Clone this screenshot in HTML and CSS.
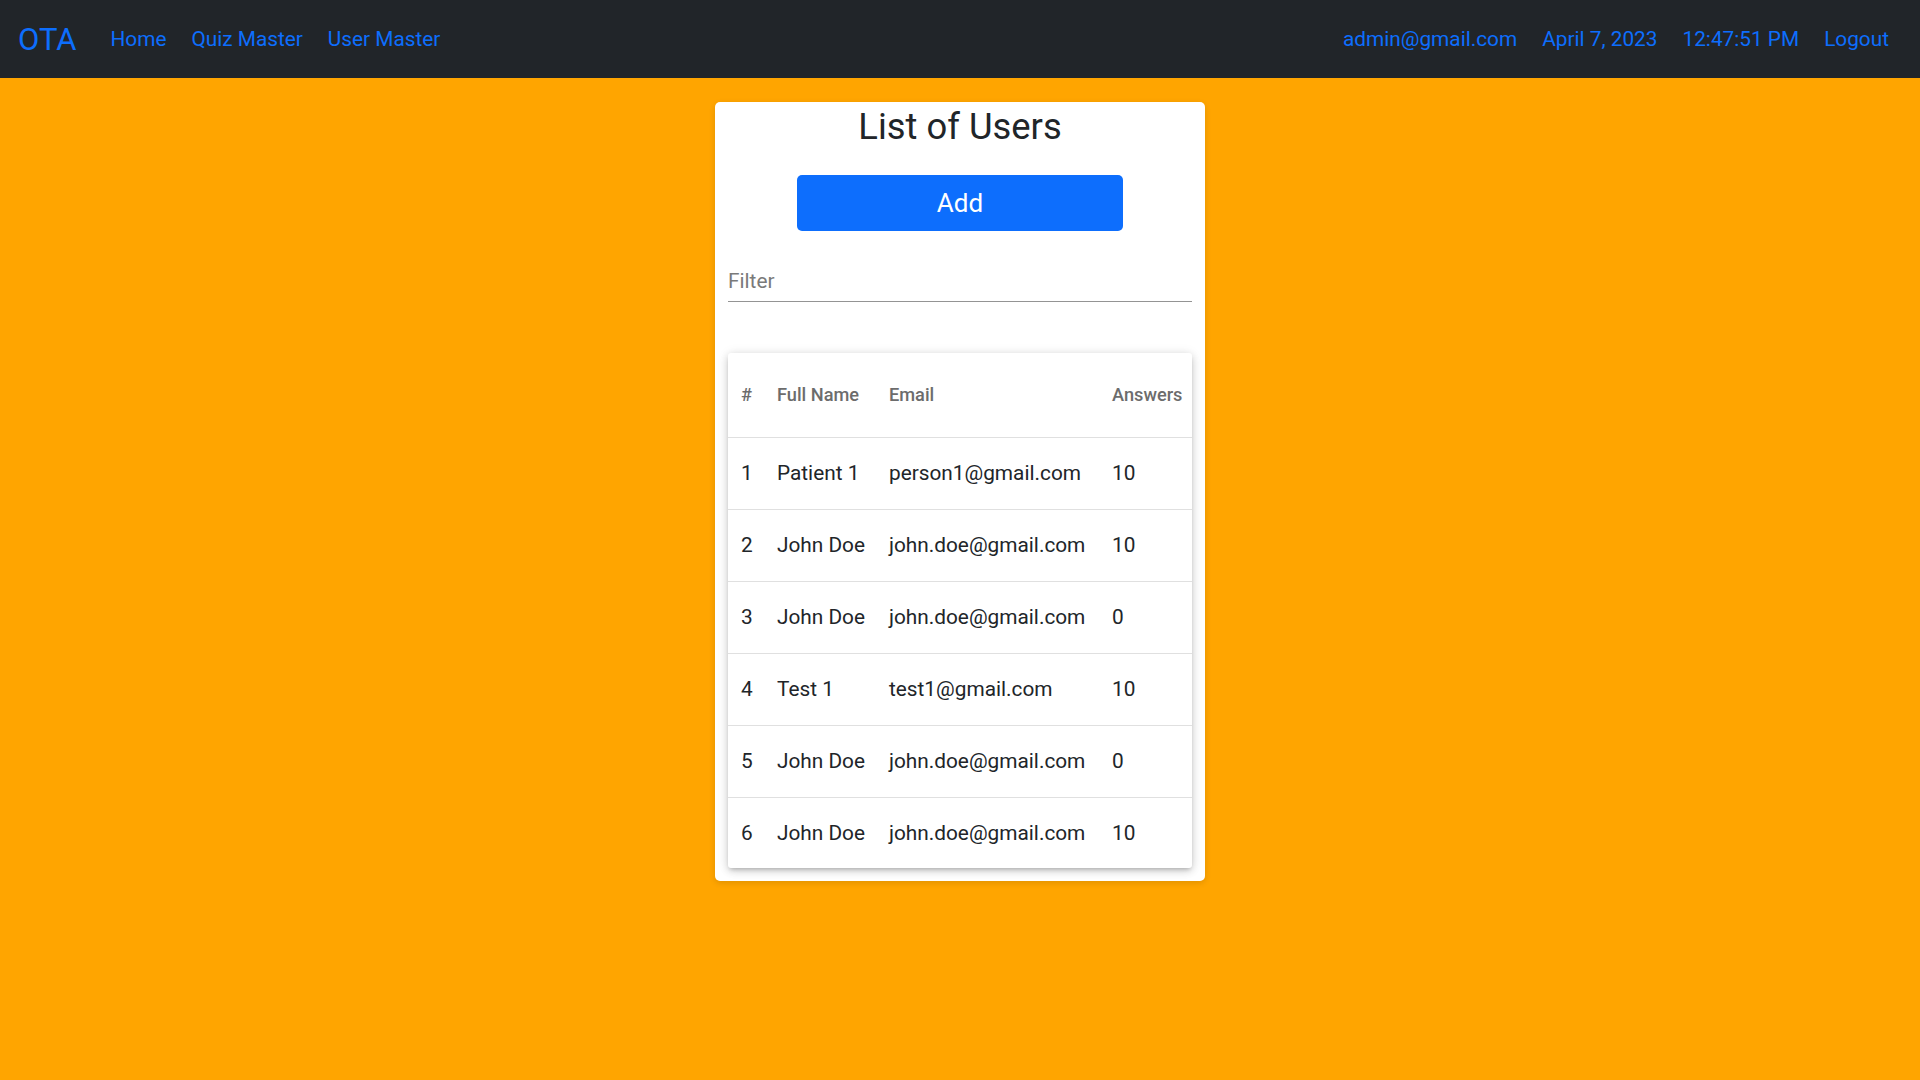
FILE: index.html
```html
<!DOCTYPE html>
<html>
<head>
<meta charset="utf-8">
<link rel="stylesheet" href="styles.css">
</head>
<body>
<nav class="navbar">
  <div class="nav-left">
    <a class="brand" href="#">OTA</a>
    <a class="nav-link" href="#">Home</a>
    <a class="nav-link" href="#">Quiz Master</a>
    <a class="nav-link" href="#">User Master</a>
  </div>
  <div class="nav-right">
    <span class="nav-link">admin@gmail.com</span>
    <span class="nav-link">April 7, 2023</span>
    <span class="nav-link">12:47:51 PM</span>
    <a class="nav-link" href="#">Logout</a>
  </div>
</nav>
<main class="page">
  <section class="card">
    <h3 class="title">List of Users</h3>
    <button class="btn-add">Add</button>
    <div class="filter">
      <input class="filter-input" type="text" placeholder="Filter">
    </div>
    <div class="table-paper">
      <table class="users">
        <colgroup>
          <col class="c1"><col class="c2"><col class="c3"><col class="c4">
        </colgroup>
        <thead>
          <tr><th>#</th><th>Full Name</th><th>Email</th><th>Answers</th></tr>
        </thead>
        <tbody>
          <tr><td>1</td><td>Patient 1</td><td>person1@gmail.com</td><td>10</td></tr>
          <tr><td>2</td><td>John Doe</td><td>john.doe@gmail.com</td><td>10</td></tr>
          <tr><td>3</td><td>John Doe</td><td>john.doe@gmail.com</td><td>0</td></tr>
          <tr><td>4</td><td>Test 1</td><td>test1@gmail.com</td><td>10</td></tr>
          <tr><td>5</td><td>John Doe</td><td>john.doe@gmail.com</td><td>0</td></tr>
          <tr><td>6</td><td>John Doe</td><td>john.doe@gmail.com</td><td>10</td></tr>
        </tbody>
      </table>
    </div>
  </section>
</main>
</body>
</html>
```
FILE: styles.css
```css
* { box-sizing: border-box; }
html, body {
  margin: 0;
  padding: 0;
  height: 100%;
}
body {
  background: #ffa500;
  font-family: Roboto, "Noto Sans", Arial, sans-serif;
  color: #212529;
}
.navbar {
  height: 78px;
  background: #212529;
  display: flex;
  align-items: center;
  justify-content: space-between;
  padding: 0 31px 0 18px;
}
.nav-left, .nav-right {
  display: flex;
  align-items: center;
  gap: 25px;
}
.brand {
  color: #0d6efd;
  font-size: 31px;
  text-decoration: none;
  margin-right: 9px;
  line-height: 1;
}
.nav-link {
  color: #0d6efd;
  font-size: 20.8px;
  text-decoration: none;
  line-height: 1;
  padding-top: 1px;
}
.page {
  display: flex;
  justify-content: center;
  padding-top: 24px;
}
.card {
  width: 490px;
  background: #fff;
  border-radius: 5px;
  box-shadow: 0 2px 6px rgba(0,0,0,0.12);
  padding: 0 13px 13px;
  display: flex;
  flex-direction: column;
  align-items: center;
}
.title {
  margin: 0;
  font-size: 36.4px;
  font-weight: 400;
  line-height: 43px;
  padding-top: 3px;
}
.btn-add {
  margin-top: 27px;
  width: 326px;
  height: 56px;
  background: #0d6efd;
  color: #fff;
  border: none;
  border-radius: 5px;
  font-family: Roboto, "Noto Sans", Arial, sans-serif;
  font-size: 26px;
  cursor: pointer;
}
.filter {
  width: 100%;
  margin-top: 34px;
  border-bottom: 1.5px solid #949494;
}
.filter-input {
  width: 100%;
  border: none;
  outline: none;
  background: transparent;
  font-family: Roboto, "Noto Sans", Arial, sans-serif;
  font-size: 20.8px;
  padding: 4px 0 8px;
  color: #212529;
}
.filter-input::placeholder {
  color: #7a7a7a;
}
.table-paper {
  width: 100%;
  margin-top: 51px;
  background: #fff;
  border-radius: 3px;
  box-shadow: 0 3px 4px -2px rgba(0,0,0,0.2), 0 3px 8px rgba(0,0,0,0.14), 0 1px 12px rgba(0,0,0,0.1);
}
.users {
  width: 100%;
  border-collapse: collapse;
  table-layout: fixed;
}
.c1 { width: 36px; }
.c2 { width: 112px; }
.c3 { width: 223px; }
.c4 { width: 93px; }
.users th {
  height: 84px;
  text-align: left;
  font-weight: 500;
  font-size: 18.2px;
  color: #6c6c6c;
  padding: 0 13px;
  border-bottom: 1px solid #e0e0e0;
  white-space: nowrap;
}
.users td {
  height: 72px;
  font-size: 20.8px;
  color: #212529;
  padding: 0 13px;
  border-bottom: 1px solid #e0e0e0;
  white-space: nowrap;
}
.users tbody tr:last-child td {
  border-bottom: none;
  height: 71px;
}
```
